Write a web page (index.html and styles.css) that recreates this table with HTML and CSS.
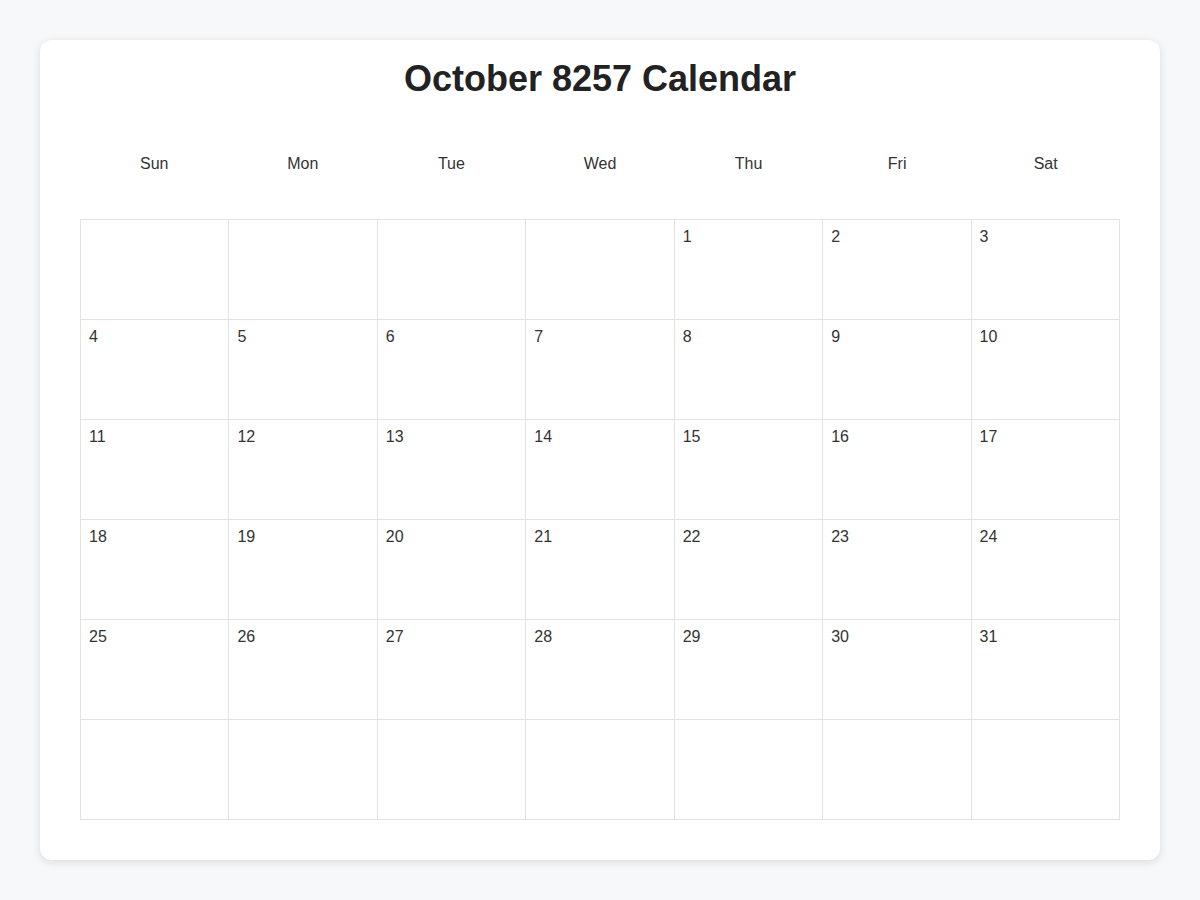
FILE: index.html
```html
<!DOCTYPE html>
<html lang="en">
<head>
<meta charset="utf-8">
<title>October 8257 Calendar</title>
<link rel="stylesheet" href="styles.css">
</head>
<body>
<main class="card">
  <h1 class="title">October 8257 Calendar</h1>
  <div class="weekdays">
    <div>Sun</div><div>Mon</div><div>Tue</div><div>Wed</div><div>Thu</div><div>Fri</div><div>Sat</div>
  </div>
  <div class="grid">
    <div class="cell"></div><div class="cell"></div><div class="cell"></div><div class="cell"></div>
    <div class="cell">1</div><div class="cell">2</div><div class="cell">3</div>
    <div class="cell">4</div><div class="cell">5</div><div class="cell">6</div><div class="cell">7</div>
    <div class="cell">8</div><div class="cell">9</div><div class="cell">10</div>
    <div class="cell">11</div><div class="cell">12</div><div class="cell">13</div><div class="cell">14</div>
    <div class="cell">15</div><div class="cell">16</div><div class="cell">17</div>
    <div class="cell">18</div><div class="cell">19</div><div class="cell">20</div><div class="cell">21</div>
    <div class="cell">22</div><div class="cell">23</div><div class="cell">24</div>
    <div class="cell">25</div><div class="cell">26</div><div class="cell">27</div><div class="cell">28</div>
    <div class="cell">29</div><div class="cell">30</div><div class="cell">31</div>
    <div class="cell"></div><div class="cell"></div><div class="cell"></div><div class="cell"></div>
    <div class="cell"></div><div class="cell"></div><div class="cell"></div>
  </div>
</main>
</body>
</html>
```
FILE: styles.css
```css
* { box-sizing: border-box; }
html, body {
  margin: 0;
  padding: 0;
  background: #f7f8fa;
  font-family: "Liberation Sans", Arial, Helvetica, sans-serif;
  color: #333;
}
body {
  padding: 40px;
}
.card {
  width: 1120px;
  height: 820px;
  background: #fff;
  border-radius: 12px;
  box-shadow: 0 2px 10px rgba(0, 0, 0, 0.12);
  padding: 18px 40px 40px;
}
.title {
  margin: 0;
  font-size: 36px;
  line-height: 41px;
  font-weight: bold;
  text-align: center;
  color: #222;
}
.weekdays {
  display: grid;
  grid-template-columns: repeat(7, 1fr);
  padding: 56px 0 46px;
  font-size: 16px;
  line-height: 18px;
  text-align: center;
  color: #333;
}
.grid {
  display: grid;
  grid-template-columns: repeat(7, 1fr);
  grid-auto-rows: 100px;
  border-top: 1px solid #e3e3e3;
  border-left: 1px solid #e3e3e3;
}
.cell {
  border-right: 1px solid #e3e3e3;
  border-bottom: 1px solid #e3e3e3;
  padding: 8px 8px;
  font-size: 16px;
  line-height: 18px;
  color: #333;
}
```
